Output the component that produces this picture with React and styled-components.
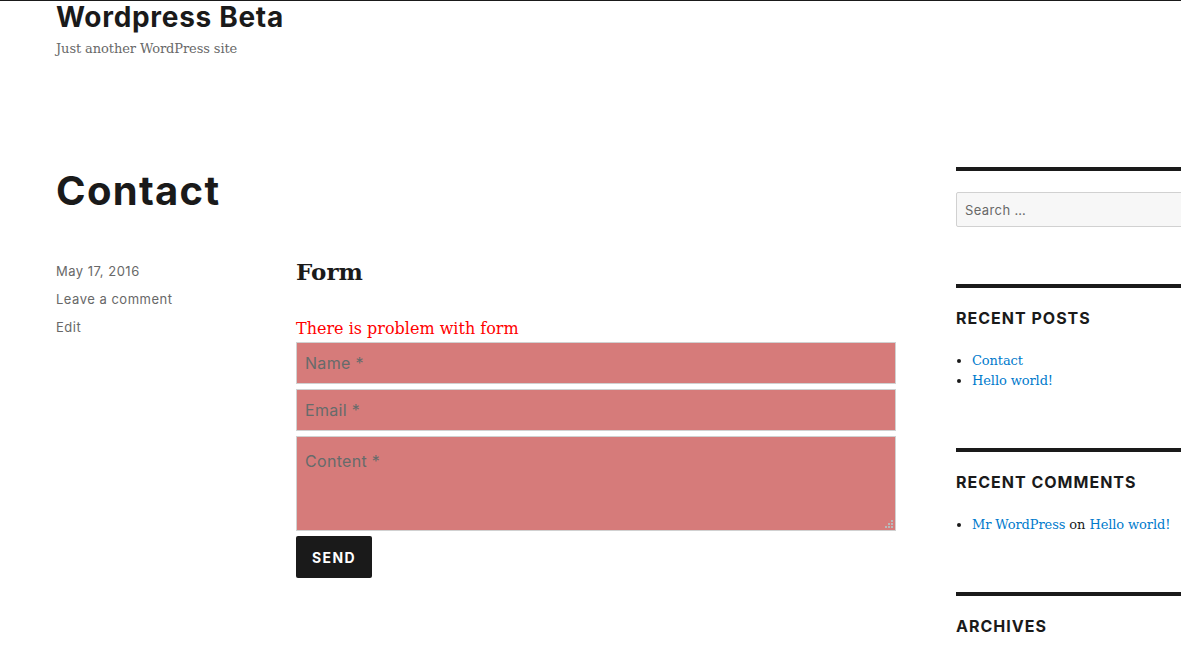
import React from 'react';
import styled, { createGlobalStyle } from 'styled-components';

const GlobalStyle = createGlobalStyle`
  html, body {
    margin: 0;
    padding: 0;
    background: #fff;
    overflow: hidden;
  }
  body {
    border-top: 1px solid #1a1a1a;
    color: #1a1a1a;
    font-family: "DejaVu Serif", serif;
  }
`;

const sans = `"Inter", "DejaVu Sans", sans-serif`;
const serif = `"DejaVu Serif", "Liberation Serif", serif`;

const Page = styled.div`
  width: 1400px;
  padding: 0 56px;
  box-sizing: border-box;
`;

const Header = styled.header`
  height: 166px;
`;

const SiteTitle = styled.h1`
  margin: 0;
  font-family: ${sans};
  font-weight: 700;
  font-size: 28px;
  line-height: 33px;
  letter-spacing: 0.7px;
`;

const Tagline = styled.p`
  margin: 2px 0 0;
  font-family: ${serif};
  font-size: 13px;
  line-height: 26px;
  color: #686868;
  letter-spacing: -0.1px;
`;

const Layout = styled.div`
  display: grid;
  grid-template-columns: 840px 340px;
  column-gap: 60px;
  align-items: start;
`;

const Main = styled.main``;

const EntryTitle = styled.h1`
  margin: 0;
  font-family: ${sans};
  font-weight: 700;
  font-size: 40px;
  line-height: 48px;
  letter-spacing: 1.3px;
`;

const Entry = styled.div`
  display: grid;
  grid-template-columns: 240px 600px;
  margin-top: 42px;
`;

const Meta = styled.div`
  display: flex;
  flex-direction: column;
  font-family: ${sans};
  font-size: 13px;
  line-height: 28px;
  letter-spacing: 0.5px;
  color: #686868;
`;

const Content = styled.div``;

const FormTitle = styled.h2`
  margin: 0 0 30px;
  font-family: ${serif};
  font-weight: 700;
  font-size: 23px;
  line-height: 29px;
`;

const Error = styled.p`
  margin: 0;
  font-family: ${serif};
  font-size: 16px;
  line-height: 26px;
  color: #f00;
`;

const Form = styled.form`
  display: flex;
  flex-direction: column;
  align-items: flex-start;
  gap: 5px;
`;

const Field = styled.input`
  box-sizing: border-box;
  width: 100%;
  height: 42px;
  margin: 0;
  padding: 0 8px;
  background: #d67b7a;
  border: 1px solid #d1d1d1;
  border-radius: 0;
  font-family: ${sans};
  font-size: 16px;
  letter-spacing: 0.3px;
  color: #1a1a1a;
  outline: none;
  &::placeholder {
    color: #666b6b;
  }
`;

const Area = styled.textarea`
  box-sizing: border-box;
  width: 100%;
  height: 95px;
  margin: 0;
  padding: 12px 8px;
  background: #d67b7a;
  border: 1px solid #d1d1d1;
  border-radius: 0;
  font-family: ${sans};
  font-size: 16px;
  line-height: 24px;
  letter-spacing: 0.3px;
  outline: none;
  resize: none;
  &::placeholder {
    color: #666b6b;
  }
`;

const AreaWrap = styled.div`
  position: relative;
  width: 100%;
  line-height: 0;
`;

const Grip = styled.svg`
  position: absolute;
  right: 3px;
  bottom: 3px;
`;

const Send = styled.button`
  height: 42px;
  padding: 0 16px;
  background: #1a1a1a;
  border: 0;
  border-radius: 2px;
  color: #fff;
  font-family: ${sans};
  font-weight: 700;
  font-size: 14px;
  letter-spacing: 1.4px;
  text-transform: uppercase;
`;

const Sidebar = styled.aside``;

const Widget = styled.section`
  border-top: 4px solid #1a1a1a;
  padding-top: ${p => (p.$search ? 21 : 20)}px;
  margin-bottom: ${p => (p.$search ? 57 : 57)}px;
`;

const SearchInput = styled.input`
  box-sizing: border-box;
  width: 100%;
  height: 35px;
  padding: 0 8px;
  background: #f7f7f7;
  border: 1px solid #d1d1d1;
  border-radius: 2px;
  font-family: ${sans};
  font-size: 13px;
  letter-spacing: 0.4px;
  outline: none;
  &::placeholder {
    color: #686868;
  }
`;

const WidgetTitle = styled.h2`
  margin: 0 0 23px;
  font-family: ${sans};
  font-weight: 700;
  font-size: 16px;
  line-height: 20px;
  letter-spacing: 1px;
  text-transform: uppercase;
`;

const List = styled.ul`
  margin: 0;
  padding-left: 16px;
  list-style: disc;
  font-family: ${serif};
  font-size: 13px;
  line-height: 20px;
  letter-spacing: -0.1px;
`;

const Link = styled.a`
  color: #007acc;
  text-decoration: none;
`;

export default function App() {
  return (
    <>
      <GlobalStyle />
      <Page>
        <Header>
          <SiteTitle>Wordpress Beta</SiteTitle>
          <Tagline>Just another WordPress site</Tagline>
        </Header>
        <Layout>
          <Main>
            <EntryTitle>Contact</EntryTitle>
            <Entry>
              <Meta>
                <span>May 17, 2016</span>
                <span>Leave a comment</span>
                <span>Edit</span>
              </Meta>
              <Content>
                <FormTitle>Form</FormTitle>
                <Error>There is problem with form</Error>
                <Form onSubmit={e => e.preventDefault()}>
                  <Field placeholder="Name *" />
                  <Field placeholder="Email *" />
                  <AreaWrap>
                    <Area placeholder="Content *" />
                    <Grip width="8" height="8" viewBox="0 0 8 8">
                      <rect x="6" y="0" width="2" height="2" fill="#b9b9b9" />
                      <rect x="3" y="3" width="2" height="2" fill="#b9b9b9" />
                      <rect x="6" y="3" width="2" height="2" fill="#b9b9b9" />
                      <rect x="0" y="6" width="2" height="2" fill="#b9b9b9" />
                      <rect x="3" y="6" width="2" height="2" fill="#b9b9b9" />
                      <rect x="6" y="6" width="2" height="2" fill="#b9b9b9" />
                    </Grip>
                  </AreaWrap>
                  <Send type="submit">Send</Send>
                </Form>
              </Content>
            </Entry>
          </Main>
          <Sidebar>
            <Widget $search>
              <SearchInput placeholder="Search …" />
            </Widget>
            <Widget>
              <WidgetTitle>Recent Posts</WidgetTitle>
              <List>
                <li><Link href="#">Contact</Link></li>
                <li><Link href="#">Hello world!</Link></li>
              </List>
            </Widget>
            <Widget>
              <WidgetTitle>Recent Comments</WidgetTitle>
              <List>
                <li><Link href="#">Mr WordPress</Link> on <Link href="#">Hello world!</Link></li>
              </List>
            </Widget>
            <Widget>
              <WidgetTitle>Archives</WidgetTitle>
            </Widget>
          </Sidebar>
        </Layout>
      </Page>
    </>
  );
}
